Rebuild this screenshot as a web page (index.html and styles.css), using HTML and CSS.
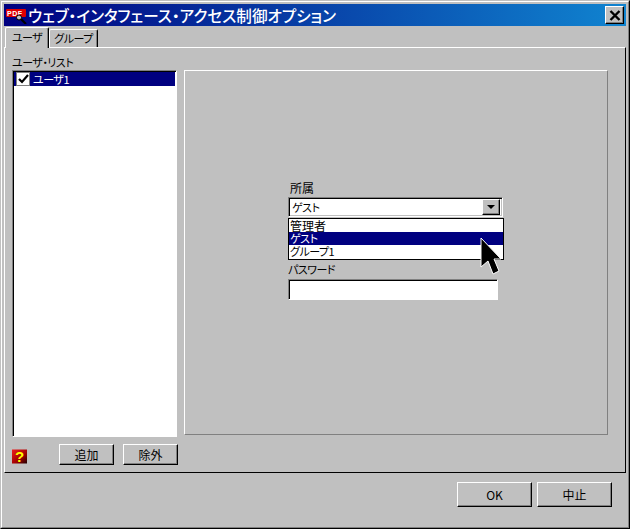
FILE: index.html
```html
<!DOCTYPE html>
<html lang="ja">
<head>
<meta charset="utf-8">
<title>ウェブ・インタフェース・アクセス制御オプション</title>
<link rel="stylesheet" href="styles.css">
</head>
<body>
<div class="window">
  <div class="window-inner">
    <header class="titlebar">
      <svg class="app-icon" width="22" height="18" viewBox="0 0 22 18">
        <rect x="0" y="3" width="20" height="8" rx="1" fill="#e00000"/>
        <text x="1" y="9.800" class="app-icon-text">PDF</text>
        <path d="M15 13l5 5" stroke="#000" stroke-width="2.200"/>
        <circle cx="13" cy="11.500" r="2.500" fill="#c0c0c0" stroke="#000"/>
      </svg>
      <span class="title-text">ウェブ・インタフェース・アクセス制御オプション</span>
      <button class="close-btn" aria-label="閉じる">
        <svg width="12" height="11" viewBox="0 0 12 11"><path d="M1.500 1l9 9M10.500 1l-9 9" stroke="#000" stroke-width="2.400"/></svg>
      </button>
    </header>
    <nav class="tabs">
      <div class="tab tab-active kana">ユーザ</div>
      <div class="tab kana">グループ</div>
    </nav>
    <section class="panel">
      <div class="panel-body">
        <div class="left-col">
          <div class="list-label kana">ユーザ・リスト</div>
          <div class="listbox">
            <div class="list-row">
              <span class="check">
                <svg width="11" height="10" viewBox="0 0 11 10"><path d="M1 5l3 3 6-7" fill="none" stroke="#000" stroke-width="2.200"/></svg>
              </span>
              <span class="kana">ユーザ1</span>
            </div>
          </div>
        </div>
        <div class="detail">
          <div class="form">
            <div class="field-label">所属</div>
            <div class="combo">
              <span class="combo-value kana">ゲスト</span>
              <span class="combo-arrow"></span>
            </div>
            <div class="popup">
              <div class="popup-row">管理者</div>
              <div class="popup-row popup-selected kana">ゲスト</div>
              <div class="popup-row kana">グループ1</div>
            </div>
            <div class="field-label password-label kana">パスワード</div>
            <div class="input"></div>
            <svg class="cursor" width="22" height="40" viewBox="0 0 22 40">
              <path d="M1 1v29l7-6 5 13 6-3-5-12h7z" fill="#000" stroke="#fff" stroke-width="1"/>
            </svg>
          </div>
        </div>
      </div>
      <div class="panel-actions">
        <svg class="help-icon" width="16" height="15" viewBox="0 0 16 15">
          <defs><linearGradient id="helpfill" x1="0" y1="0" x2="1" y2="1"><stop offset="0" stop-color="#f02020"/><stop offset="0.600" stop-color="#a00000"/><stop offset="1" stop-color="#200000"/></linearGradient></defs>
          <rect width="15" height="14" y="0.500" fill="url(#helpfill)"/>
          <text x="3" y="13" class="help-text">?</text>
        </svg>
        <button class="btn btn-small">追加</button>
        <button class="btn btn-small">除外</button>
      </div>
    </section>
    <footer class="footer">
      <button class="btn btn-large">OK</button>
      <button class="btn btn-large">中止</button>
    </footer>
  </div>
</div>
</body>
</html>
```

FILE: styles.css
```css
* { box-sizing: border-box; }
html, body { margin: 0; padding: 0; }
body {
  width: 630px;
  height: 529px;
  overflow: hidden;
  font-family: "Noto Sans CJK JP", "Noto Sans", sans-serif;
  font-size: 12px;
  line-height: 13px;
  color: #000;
  background: #c0c0c0;
}
.kana { font-size: 11px; letter-spacing: -0.500px; font-feature-settings: "palt"; white-space: nowrap; }
.window {
  width: 630px;
  height: 529px;
  border: 1px solid;
  border-color: #c0c0c0 #000 #000 #c0c0c0;
}
.window-inner {
  height: 100%;
  border: 1px solid;
  border-color: #fff #808080 #808080 #fff;
  padding: 2px;
  display: flex;
  flex-direction: column;
}
.titlebar {
  height: 22px;
  flex: none;
  display: flex;
  align-items: center;
  padding: 0 2px;
  background: linear-gradient(90deg, #000080, #1084d0);
  color: #fff;
}
.app-icon { flex: none; }
.app-icon-text { font: bold 7px "Liberation Sans", sans-serif; fill: #fff; letter-spacing: 0.500px; }
.title-text {
  font-size: 15.600px;
  line-height: 20px;
  font-weight: 500;
  flex: 1;
  font-feature-settings: "palt";
  white-space: nowrap;
}
.close-btn {
  width: 19px;
  height: 18px;
  padding: 0;
  display: flex;
  align-items: center;
  justify-content: center;
  background: #c0c0c0;
  border: 1px solid;
  border-color: #fff #000 #000 #fff;
  box-shadow: inset -1px -1px 0 #808080;
}
.tabs {
  height: 21px;
  flex: none;
  display: flex;
  align-items: flex-end;
  padding-left: 1px;
  position: relative;
  z-index: 1;
}
.tab {
  height: 18px;
  width: 49px;
  text-align: center;
  line-height: 17px;
  border: 1px solid;
  border-color: #fff #000 #c0c0c0 #fff;
  border-bottom: 0;
  border-radius: 2px 2px 0 0;
  box-shadow: inset -1px 0 0 #808080;
}
.tab-active {
  height: 21px;
  width: 44px;
  line-height: 19px;
  margin-bottom: -1px;
  background: #c0c0c0;
}
.panel {
  height: 426px;
  flex: none;
  border: 1px solid;
  border-color: #fff #000 #000 #fff;
  padding: 8px 17px 0 7px;
  display: flex;
  flex-direction: column;
}
.panel-body {
  display: flex;
  height: 381px;
  flex: none;
  gap: 7px;
}
.left-col {
  width: 165px;
  display: flex;
  flex-direction: column;
}
.list-label {
  height: 14px;
  flex: none;
  line-height: 13px;
}
.listbox {
  flex: 1;
  background: #fff;
  border: 1px solid;
  border-color: #808080 #fff #fff #808080;
  box-shadow: inset 1px 1px 0 #000;
  padding: 1px 1px 0 1px;
}
.list-row {
  height: 14px;
  display: flex;
  align-items: center;
  background: #000080;
  color: #fff;
  gap: 3px;
  padding-left: 2px;
}
.check {
  width: 14px;
  height: 14px;
  flex: none;
  display: flex;
  align-items: center;
  justify-content: center;
  background: #fff;
  border: 1px solid #808080;
}
.detail {
  flex: 1;
  margin-top: 14px;
  height: 365px;
  border: 1px solid;
  border-color: #fff #808080 #808080 #fff;
  padding: 111px 0 0 103px;
}
.form {
  position: relative;
  width: 215px;
}
.field-label { height: 15px; line-height: 12px; padding-left: 2px; }
.combo {
  height: 20px;
  width: 215px;
  background: #fff;
  border: 1px solid;
  border-color: #808080 #fff #fff #808080;
  box-shadow: inset 1px 1px 0 #000, inset -1px -1px 0 #c0c0c0;
  display: flex;
  align-items: center;
  justify-content: space-between;
  padding: 0 2px 0 3px;
}
.combo-arrow {
  width: 18px;
  height: 16px;
  background: #c0c0c0;
  border: 1px solid;
  border-color: #fff #000 #000 #fff;
  box-shadow: inset -1px -1px 0 #808080;
  position: relative;
}
.combo-arrow::after {
  content: "";
  position: absolute;
  left: 4px;
  top: 5px;
  border: 4px solid transparent;
  border-top: 4px solid #000;
  border-bottom: 0;
}
.popup {
  position: absolute;
  left: 0;
  top: 36px;
  width: 216px;
  height: 42px;
  background: #fff;
  border: 1px solid #000;
  z-index: 2;
}
.popup-row { height: 13px; line-height: 13px; padding-left: 1px; }
.popup-selected { background: #000080; color: #fff; }
.password-label { margin-top: 46px; height: 16px; line-height: 13px; padding-left: 0; }
.input {
  width: 210px;
  height: 21px;
  background: #fff;
  border: 1px solid;
  border-color: #808080 #fff #fff #808080;
  box-shadow: inset 1px 1px 0 #000;
}
.cursor {
  position: absolute;
  left: 192px;
  top: 55px;
  z-index: 3;
}
.panel-actions {
  height: 21px;
  margin-top: 7px;
  display: flex;
  align-items: center;
}
.help-icon { flex: none; margin: 3px 31px 0 0; }
.help-text { font: bold 15px "Liberation Sans", sans-serif; fill: #ffff00; }
.btn {
  font: inherit;
  color: #000;
  background: #c0c0c0;
  padding: 0;
  border: 1px solid;
  border-color: #fff #000 #000 #fff;
  box-shadow: inset -1px -1px 0 #808080;
}
.btn-small { width: 55px; height: 21px; margin-right: 9px; }
.footer {
  flex: 1;
  display: flex;
  justify-content: flex-end;
  gap: 5px;
  padding: 9px 14px 0 0;
}
.btn-large { width: 75px; height: 25px; }
```
